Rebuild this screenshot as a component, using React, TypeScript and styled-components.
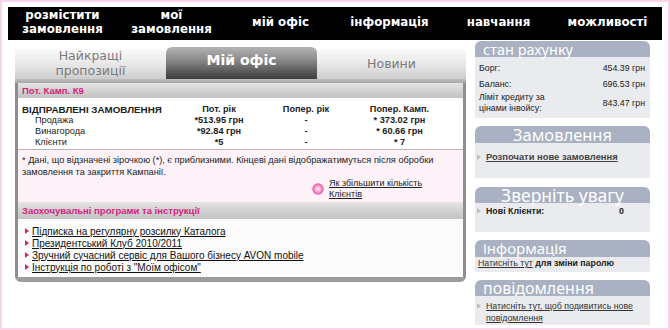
import React from 'react';
import styled, { createGlobalStyle } from 'styled-components';

const Global = createGlobalStyle`
  html, body { margin: 0; padding: 0; background: #fff; }
  body { font-family: "Liberation Sans", Arial, sans-serif; color: #222; }
  * { box-sizing: border-box; }
`;

const Page = styled.div`
  width: 670px;
  height: 330px;
  border: 2px solid #f9d3e7;
  padding: 5px 6px 0 6px;
  overflow: hidden;
  background: #fff;
`;

const NavBar = styled.nav`
  display: flex;
  width: 654px;
  height: 33px;
  background: #000;
`;

const NavItem = styled.div`
  flex: 1;
  display: flex;
  align-items: center;
  justify-content: center;
  text-align: center;
  color: #fff;
  font-family: "DejaVu Sans", sans-serif;
  font-weight: 700;
  font-size: 11.8px;
  line-height: 13.8px;
  padding-bottom: 1px;
`;

const Main = styled.div`
  display: flex;
  gap: 9px;
  padding-left: 7px;
`;

const LeftColumn = styled.div`
  width: 451px;
  margin-top: 7px;
`;

const Tabs = styled.div`
  display: flex;
  align-items: flex-end;
  height: 32px;
`;

const Tab = styled.div<{ $active?: boolean; $w: number }>`
  width: ${p => p.$w}px;
  height: ${p => (p.$active ? 32 : 30)}px;
  display: flex;
  align-items: center;
  justify-content: center;
  text-align: center;
  font-family: "DejaVu Sans", sans-serif;
  font-size: ${p => (p.$active ? 14 : 12.5)}px;
  font-weight: ${p => (p.$active ? 700 : 400)};
  line-height: 14.6px;
  color: ${p => (p.$active ? '#fff' : '#7a7a7a')};
  border-radius: ${p => (p.$active ? '6px 6px 0 0' : '0')};
  background: ${p =>
    p.$active
      ? 'linear-gradient(180deg, #b4b4b4 0%, #8a8a8a 40%, #555 80%, #3c3c3c 100%)'
      : 'linear-gradient(180deg, #fafafa 0%, #e8e8e8 50%, #cdcdcd 100%)'};
  padding-bottom: ${p => (p.$active ? 6 : 0)}px;
`;

const Strip = styled.div`
  height: 4px;
  background: linear-gradient(180deg, #bdbdbd, #a9a9a9);
`;

const Panel = styled.div`
  border-left: 3px solid #8e8e8e;
  border-right: 3px solid #8e8e8e;
  border-bottom: 5px solid #9c9c9c;
  border-radius: 0 0 6px 6px;
`;

const SectionBar = styled.div<{ $h: number }>`
  height: ${p => p.$h}px;
  line-height: ${p => p.$h}px;
  padding-left: 4px;
  background: linear-gradient(180deg, #e4e4e4 0%, #cfcfcf 60%, #c2c2c2 100%);
  color: #d91f7e;
  font-weight: 700;
  font-size: 9.5px;
  white-space: nowrap;
`;

const StatsTable = styled.div`
  display: grid;
  grid-template-columns: 150px 102px 72px 115px;
  grid-auto-rows: 11px;
  padding: 6px 0 1px;
  background: #fff;
  border-bottom: 1px solid #b4b4b4;
  font-size: 9.2px;
  line-height: 11px;
`;

const Cell = styled.div<{ $head?: boolean; $label?: boolean; $bold?: boolean }>`
  text-align: ${p => (p.$label || p.$head ? 'left' : 'center')};
  padding-left: ${p => (p.$head ? 4 : p.$label ? 17 : 0)}px;
  font-weight: ${p => (p.$bold || p.$head ? 700 : 400)};
  font-size: ${p => (p.$head ? 9.8 : 9.2)}px;
  white-space: nowrap;
`;

const NoteArea = styled.div`
  background: #fcf2f8;
  padding: 4px 4px 2px 4px;
  font-size: 9.2px;
  line-height: 12px;
  white-space: nowrap;
`;

const MoreLink = styled.div`
  display: flex;
  align-items: center;
  gap: 5px;
  margin-left: 290px;
  white-space: normal;
`;

const PinkBall = styled.span`
  width: 12px;
  height: 12px;
  border-radius: 50%;
  flex: none;
  background: radial-gradient(circle at 50% 50%, #fde6f2 0%, #f5a5cf 35%, #ea64ac 60%, rgba(240, 140, 195, 0) 78%);
`;

const MoreText = styled.a`
  width: 108px;
  line-height: 11px;
  color: #222;
  text-decoration: underline;
  font-size: 9px;
`;

const LinkList = styled.ul`
  list-style: none;
  margin: 0;
  padding: 6px 0 4px 7px;
  background: #fbfbfb;
`;

const LinkItem = styled.li`
  display: flex;
  align-items: center;
  gap: 3px;
  height: 12px;
  font-size: 10px;
  color: #111;
  text-decoration: underline;
`;

const Arrow = styled.span<{ $color: string }>`
  width: 0;
  height: 0;
  flex: none;
  border-left: 4px solid ${p => p.$color};
  border-top: 3px solid transparent;
  border-bottom: 3px solid transparent;
`;

const RightColumn = styled.div`
  width: 175px;
  margin-top: 1px;
  display: flex;
  flex-direction: column;
`;

const Box = styled.div<{ $gap: number }>`
  margin-top: ${p => p.$gap}px;
`;

const BoxHeader = styled.div<{ $h: number; $size: number; $center?: boolean }>`
  height: ${p => p.$h}px;
  line-height: ${p => p.$h}px;
  border-radius: 6px 6px 0 0;
  background: #a9b1c2;
  color: #fff;
  font-family: "Noto Sans", sans-serif;
  font-size: ${p => p.$size}px;
  text-align: ${p => (p.$center ? 'center' : 'left')};
  padding-left: ${p => (p.$center ? 0 : 8)}px;
  white-space: nowrap;
`;

const BoxBody = styled.div<{ $h: number; $pad: string }>`
  height: ${p => p.$h}px;
  padding: ${p => p.$pad};
  background: #e9ebef;
  font-size: 8.8px;
  color: #222;
`;

const AccountRow = styled.div<{ $h: number }>`
  display: flex;
  align-items: center;
  justify-content: space-between;
  height: ${p => p.$h}px;
`;

const AccountLabel = styled.div`
  width: 90px;
  line-height: 11px;
`;

const BulletRow = styled.div`
  display: flex;
  align-items: flex-start;
  gap: 5px;
  line-height: 12px;
`;

const ArrowWrap = styled.span`
  height: 12px;
  display: flex;
  align-items: center;
`;

const BoldLink = styled.a`
  font-weight: 700;
  font-size: 9.4px;
  color: #444;
  text-decoration: underline;
`;

const PlainLink = styled.a`
  color: #333;
  text-decoration: underline;
`;

const WrapLink = styled.a`
  color: #333;
  text-decoration: underline;
  width: 160px;
  line-height: 12px;
`;

const Bold = styled.span`
  font-weight: 700;
`;

const Spacer = styled.span`
  flex: 1;
`;

const Value = styled.span`
  font-weight: 700;
  padding-right: 26px;
`;

const navItems = [
  ['розмістити', 'замовлення'],
  ['мої', 'замовлення'],
  ['мій офіс'],
  ['інформація'],
  ['навчання'],
  ['можливості'],
];

const stats = [
  ['Продажа', '*513.95 грн', '-', '* 373.02 грн'],
  ['Винагорода', '*92.84 грн', '-', '* 60.66 грн'],
  ['Клієнти', '*5', '-', '* 7'],
];

const links = [
  'Підписка на регулярну розсилку Каталога',
  'Президентський Клуб 2010/2011',
  'Зручний сучасний сервіс для Вашого бізнесу AVON mobile',
  'Інструкція по роботі з "Моїм офісом"',
];

export default function App() {
  return (
    <>
      <Global />
      <Page>
        <NavBar>
          {navItems.map((lines, i) => (
            <NavItem key={i}>
              <div>
                {lines.map((l, j) => (
                  <div key={j}>{l}</div>
                ))}
              </div>
            </NavItem>
          ))}
        </NavBar>
        <Main>
          <LeftColumn>
            <Tabs>
              <Tab $w={151}>
                Найкращі
                <br />
                пропозиції
              </Tab>
              <Tab $w={151} $active>
                Мій офіс
              </Tab>
              <Tab $w={149}>Новини</Tab>
            </Tabs>
            <Strip />
            <Panel>
              <SectionBar $h={15}>Пот. Камп. К9</SectionBar>
              <StatsTable>
                <Cell $head>ВІДПРАВЛЕНІ ЗАМОВЛЕННЯ</Cell>
                <Cell $bold>Пот. рік</Cell>
                <Cell $bold>Попер. рік</Cell>
                <Cell $bold>Попер. Камп.</Cell>
                {stats.map(row => (
                  <React.Fragment key={row[0]}>
                    <Cell $label>{row[0]}</Cell>
                    <Cell $bold>{row[1]}</Cell>
                    <Cell $bold>{row[2]}</Cell>
                    <Cell $bold>{row[3]}</Cell>
                  </React.Fragment>
                ))}
              </StatsTable>
              <NoteArea>
                * Дані, що відзначені зірочкою (*), є приблизними. Кінцеві дані відображатимуться після обробки
                <br />
                замовлення та закриття Кампанії.
                <MoreLink>
                  <PinkBall />
                  <MoreText>Як збільшити кількість Клієнтів</MoreText>
                </MoreLink>
              </NoteArea>
              <SectionBar $h={17}>Заохочувальні програми та інструкції</SectionBar>
              <LinkList>
                {links.map(l => (
                  <LinkItem key={l}>
                    <Arrow $color="#d91f7e" />
                    {l}
                  </LinkItem>
                ))}
              </LinkList>
            </Panel>
          </LeftColumn>
          <RightColumn>
            <Box $gap={0}>
              <BoxHeader $h={16} $size={14.5}>стан рахунку</BoxHeader>
              <BoxBody $h={61} $pad="3px 5px 4px 4px">
                <AccountRow $h={16}>
                  <AccountLabel>Борг:</AccountLabel>
                  <span>454.39 грн</span>
                </AccountRow>
                <AccountRow $h={16}>
                  <AccountLabel>Баланс:</AccountLabel>
                  <span>696.53 грн</span>
                </AccountRow>
                <AccountRow $h={22}>
                  <AccountLabel>Ліміт кредиту за цінами інвойсу:</AccountLabel>
                  <span>843.47 грн</span>
                </AccountRow>
              </BoxBody>
            </Box>
            <Box $gap={8}>
              <BoxHeader $h={17} $size={16.5} $center>Замовлення</BoxHeader>
              <BoxBody $h={35} $pad="8px 0 0 2px">
                <BulletRow>
                  <ArrowWrap>
                    <Arrow $color="#b9bdc6" />
                  </ArrowWrap>
                  <BoldLink>Розпочати нове замовлення</BoldLink>
                </BulletRow>
              </BoxBody>
            </Box>
            <Box $gap={9}>
              <BoxHeader $h={16} $size={17.5} $center>Зверніть увагу</BoxHeader>
              <BoxBody $h={29} $pad="2px 0 0 2px">
                <BulletRow>
                  <ArrowWrap>
                    <Arrow $color="#b9bdc6" />
                  </ArrowWrap>
                  <Bold>Нові Клієнти:</Bold>
                  <Spacer />
                  <Value>0</Value>
                </BulletRow>
              </BoxBody>
            </Box>
            <Box $gap={8}>
              <BoxHeader $h={17} $size={15}>інформація</BoxHeader>
              <BoxBody $h={15} $pad="1px 0 0 3px">
                <PlainLink>Натисніть тут</PlainLink> <Bold>для зміни паролю</Bold>
              </BoxBody>
            </Box>
            <Box $gap={8}>
              <BoxHeader $h={16} $size={16}>повідомлення</BoxHeader>
              <BoxBody $h={29} $pad="4px 0 1px 2px">
                <BulletRow>
                  <ArrowWrap>
                    <Arrow $color="#b9bdc6" />
                  </ArrowWrap>
                  <WrapLink>Натисніть тут, щоб подивитись нове повідомлення</WrapLink>
                </BulletRow>
              </BoxBody>
            </Box>
          </RightColumn>
        </Main>
      </Page>
    </>
  );
}
